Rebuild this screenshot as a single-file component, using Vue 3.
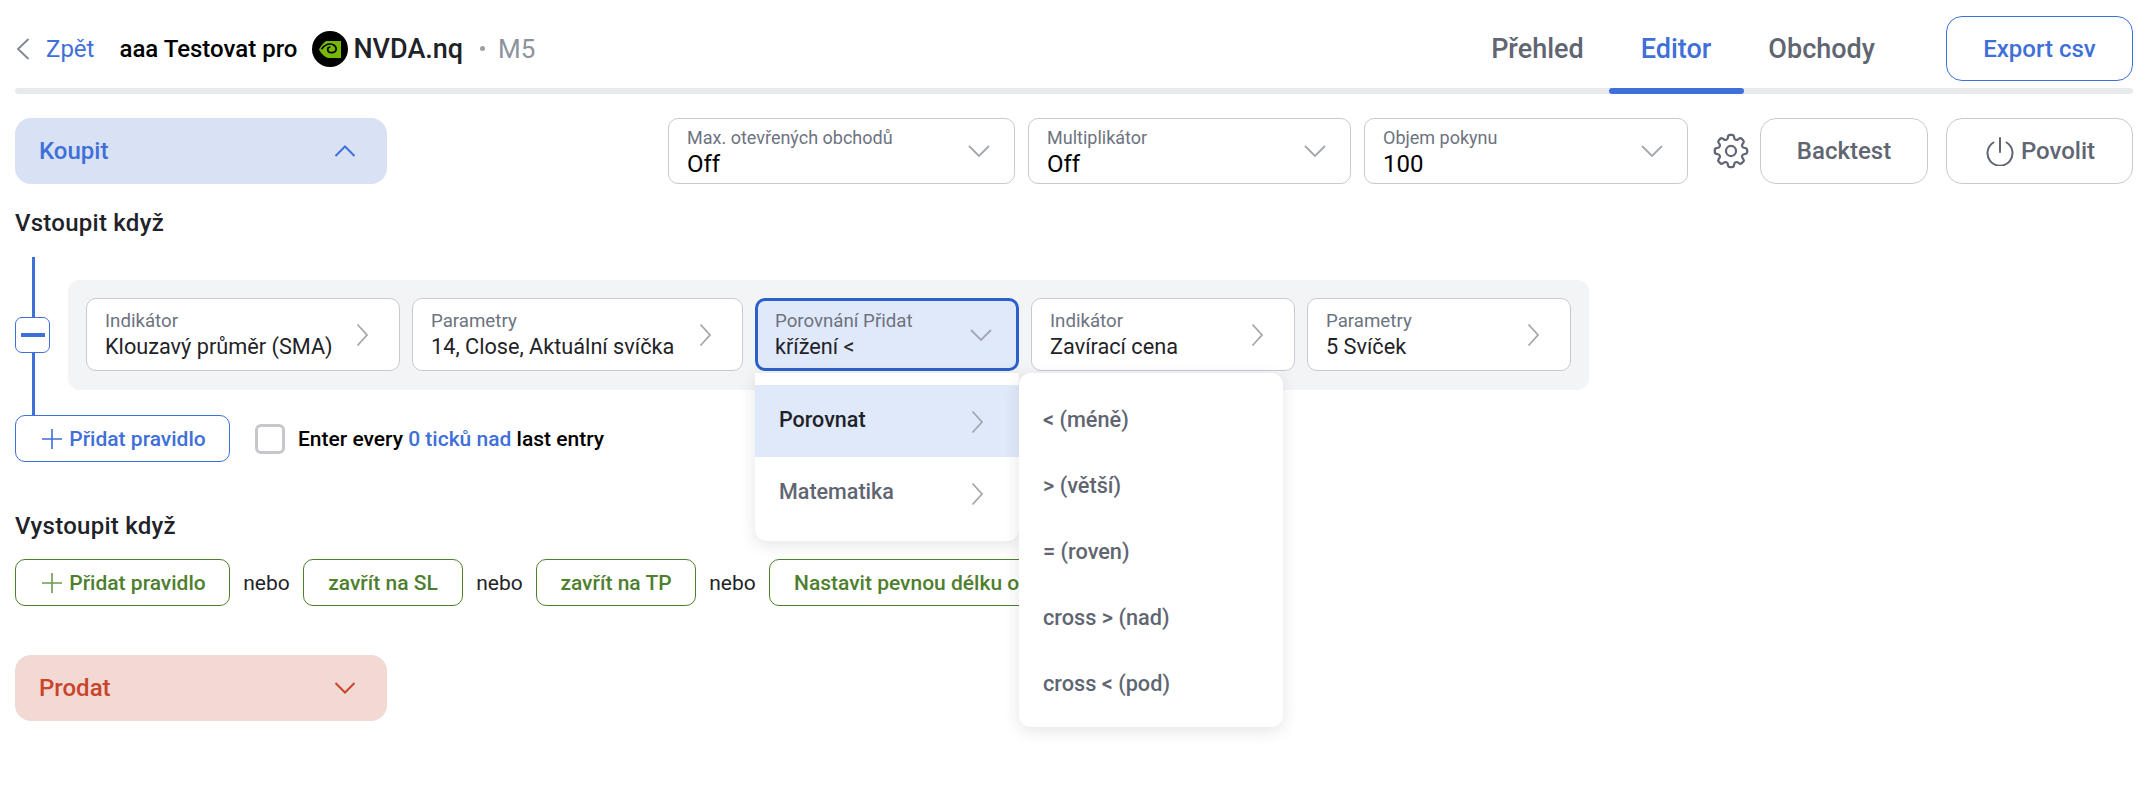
<script setup>
const selects = [
  { label: 'Max. otevřených obchodů', value: 'Off', w: 347 },
  { label: 'Multiplikátor', value: 'Off', w: 323 },
  { label: 'Objem pokynu', value: '100', w: 324 },
]
const chipsLeft = [
  { label: 'Indikátor', value: 'Klouzavý průměr (SMA)', w: 314 },
  { label: 'Parametry', value: '14, Close, Aktuální svíčka', w: 331 },
]
const chipsRight = [
  { label: 'Indikátor', value: 'Zavírací cena', w: 264 },
  { label: 'Parametry', value: '5 Svíček', w: 264 },
]
const options = ['< (méně)', '> (větší)', '= (roven)', 'cross > (nad)', 'cross < (pod)']
</script>

<template>
  <div class="page">
    <header class="head">
      <div class="crumbs">
        <svg class="back" width="14" height="24" viewBox="0 0 14 24"><path d="M12.5 2 2 12l10.500 10" /></svg>
        <span class="zpet">Zpět</span>
        <span class="name">aaa Testovat pro</span>
        <svg class="logo" width="36" height="36" viewBox="0 0 36 36">
          <circle cx="18" cy="18" r="18" fill="#000" />
          <path d="M14 10h15v17H16c-3-.8-6.500-3.500-9-8.500 1.800-3.300 4-6.600 7-8.500Z" fill="#76b900" />
          <path d="M9.500 18.200c2.500-3.500 5.500-5.200 8.500-5.200 3.600 0 6.200 2.300 6.200 5 0 2.300-2.200 3.900-4.700 3.700-2.200-.2-3.800-1.700-3.800-3.300 0-1.400 1.200-2.400 2.700-2.400" fill="none" stroke="#000" stroke-width="1.700" />
        </svg>
        <span class="sym">NVDA.nq</span>
        <span class="dot"></span>
        <span class="tf">M5</span>
      </div>
      <nav class="tabs">
        <span class="tab t1">Přehled</span>
        <span class="tab active t2">Editor</span>
        <span class="tab t3">Obchody</span>
      </nav>
      <button class="btn export">Export csv</button>
    </header>
    <div class="rule-bar"><span class="rule-active"></span></div>

    <div class="toolbar">
      <div class="panel buy">
        <span>Koupit</span>
        <svg width="22" height="12" viewBox="0 0 22 12"><path d="M1.500 11 11 1.500 20.500 11" /></svg>
      </div>
      <div class="tools">
        <div v-for="s in selects" :key="s.label" class="field top-field" :style="{ width: s.w + 'px' }">
          <div class="field-text">
            <span class="flabel">{{ s.label }}</span>
            <span class="fvalue">{{ s.value }}</span>
          </div>
          <svg class="caret" width="22" height="12" viewBox="0 0 22 12"><path d="M1 1l10 10L21 1" /></svg>
        </div>
        <svg class="gear" width="36" height="36" viewBox="2 2 20 20" fill="none">
          <path d="M10.340 3.940c.09-.542.56-.94 1.110-.94h1.093c.550 0 1.020.398 1.110.940l.149.894c.070.424.384.764.780.930.398.164.855.142 1.205-.108l.737-.527a1.125 1.125 0 0 1 1.450.120l.773.774c.39.389.44 1.002.12 1.450l-.527.737c-.250.350-.272.806-.107 1.204.165.397.505.710.930.780l.893.150c.543.090.940.560.940 1.109v1.094c0 .550-.397 1.020-.940 1.110l-.893.149c-.425.070-.765.383-.930.780-.165.398-.143.854.107 1.204l.527.738c.320.447.269 1.060-.120 1.450l-.774.773a1.125 1.125 0 0 1-1.449.120l-.738-.527c-.350-.250-.806-.272-1.203-.107-.397.165-.710.505-.781.929l-.149.894c-.090.542-.560.940-1.110.940h-1.094c-.550 0-1.019-.398-1.110-.940l-.148-.894c-.071-.424-.384-.764-.781-.930-.398-.164-.854-.142-1.204.108l-.738.527c-.447.320-1.060.269-1.450-.120l-.773-.774a1.125 1.125 0 0 1-.120-1.450l.527-.737c.250-.350.273-.806.108-1.204-.165-.397-.505-.710-.930-.780l-.894-.150c-.542-.090-.940-.560-.940-1.109v-1.094c0-.550.398-1.020.940-1.110l.894-.149c.424-.070.765-.383.930-.780.165-.398.143-.854-.108-1.204l-.526-.738a1.125 1.125 0 0 1 .120-1.450l.773-.773a1.125 1.125 0 0 1 1.450-.120l.737.527c.350.250.807.272 1.204.107.397-.165.710-.505.780-.929l.150-.894Z" stroke="#5f6672" stroke-width="1.250" />
          <circle cx="12" cy="12" r="2.800" stroke="#5f6672" stroke-width="1.250" />
        </svg>
        <button class="btn grey backtest">Backtest</button>
        <button class="btn grey povolit">
          <svg width="28" height="30" viewBox="0 0 28 30" fill="none"><path d="M14 2v14M7.500 6.500a12.500 12.500 0 1 0 13 0" stroke="#5f6672" stroke-width="2" stroke-linecap="round" /></svg>
          Povolit
        </button>
      </div>
    </div>

    <h3 class="title enter">Vstoupit když</h3>

    <div class="entry">
      <div class="tree">
        <span class="line l1"></span>
        <span class="minus"><i></i></span>
        <span class="line l2"></span>
      </div>
      <div class="rules">
        <div v-for="c in chipsLeft" :key="c.label" class="field chip" :style="{ width: c.w + 'px' }">
          <div class="field-text">
            <span class="flabel">{{ c.label }}</span>
            <span class="fvalue">{{ c.value }}</span>
          </div>
          <svg class="caret" width="12" height="24" viewBox="0 0 12 24"><path d="M1.500 1.500 11 12 1.500 22.500" /></svg>
        </div>
        <div class="compare">
          <div class="field chip open">
            <div class="field-text">
              <span class="flabel">Porovnání Přidat</span>
              <span class="fvalue">křížení &lt;</span>
            </div>
            <svg class="caret" width="22" height="12" viewBox="0 0 22 12"><path d="M1 1l10 10L21 1" /></svg>
          </div>
          <div class="menu menu-a">
            <div class="mi current"><span>Porovnat</span><svg class="caret" width="12" height="24" viewBox="0 0 12 24"><path d="M1.500 1.500 11 12 1.500 22.500" /></svg></div>
            <div class="mi"><span>Matematika</span><svg class="caret" width="12" height="24" viewBox="0 0 12 24"><path d="M1.500 1.500 11 12 1.500 22.500" /></svg></div>
          </div>
          <div class="menu menu-b">
            <div v-for="o in options" :key="o" class="opt">{{ o }}</div>
          </div>
        </div>
        <div v-for="c in chipsRight" :key="c.value" class="field chip" :style="{ width: c.w + 'px' }">
          <div class="field-text">
            <span class="flabel">{{ c.label }}</span>
            <span class="fvalue">{{ c.value }}</span>
          </div>
          <svg class="caret" width="12" height="24" viewBox="0 0 12 24"><path d="M1.500 1.500 11 12 1.500 22.500" /></svg>
        </div>
      </div>
    </div>

    <div class="add-row">
      <button class="btn add blue">
        <svg width="22" height="22" viewBox="0 0 22 22"><path d="M11 1v20M1 11h20" /></svg>
        Přidat pravidlo
      </button>
      <span class="check"></span>
      <span class="every">Enter every <b>0 ticků nad</b> last entry</span>
    </div>

    <h3 class="title exit">Vystoupit když</h3>

    <div class="exit-row">
      <button class="btn add green">
        <svg width="22" height="22" viewBox="0 0 22 22"><path d="M11 1v20M1 11h20" /></svg>
        Přidat pravidlo
      </button>
      <span class="or">nebo</span>
      <button class="btn green g2">zavřít na SL</button>
      <span class="or">nebo</span>
      <button class="btn green g2">zavřít na TP</button>
      <span class="or">nebo</span>
      <button class="btn green g3">Nastavit pevnou délku obchodu</button>
    </div>

    <div class="panel sell">
      <span>Prodat</span>
      <svg width="22" height="12" viewBox="0 0 22 12"><path d="M1.500 1 11 10.500 20.500 1" /></svg>
    </div>
  </div>
</template>

<style scoped>
.page {
  box-sizing: border-box;
  width: 2150px;
  height: 788px;
  padding: 16px 17px 0 15px;
  font-family: Roboto, "Noto Sans", sans-serif;
  color: #1f2329;
  overflow: hidden;
  background: #fff;
}
button { font-family: inherit; }
.head { display: flex; align-items: center; height: 65px; }
.crumbs { display: flex; align-items: center; flex: 1; }
.back { fill: none; stroke: #7f8690; stroke-width: 1.800; margin-left: 1px; }
.zpet { color: #3f6fd8; font-size: 24px; margin-left: 16px; }
.name { color: #000; font-size: 24px; font-weight: 500; margin-left: 25px; }
.logo { margin-left: 15px; }
.sym { font-size: 27px; font-weight: 500; margin-left: 5px; color: #1f2329; }
.dot { width: 5px; height: 5px; border-radius: 50%; background: #9aa0aa; margin-left: 17px; }
.tf { color: #8d939d; font-size: 26px; margin-left: 13px; }
.tabs { display: flex; align-self: stretch; align-items: center; margin-right: 71px; }
.tab { font-size: 27px; font-weight: 500; color: #5f6672; }
.t2 { margin-left: 57px; }
.t3 { margin-left: 57px; }
.active { color: #3f6fd8; }
.btn {
  box-sizing: border-box;
  display: flex;
  align-items: center;
  justify-content: center;
  background: #fff;
  border: 1px solid #c8cad0;
  border-radius: 16px;
  font-size: 24px;
  font-weight: 500;
  padding: 0;
}
.export { width: 187px; height: 65px; color: #3f6fd8; border-color: #3f6fd8; }
.rule-bar { position: relative; height: 6px; margin-top: 7px; background: #e8e9eb; border-radius: 3px; }
.rule-active { position: absolute; left: 1594px; top: 0; width: 135px; height: 6px; background: #3f6fd8; border-radius: 3px; }
.toolbar { display: flex; justify-content: space-between; margin-top: 24px; height: 66px; }
.panel {
  box-sizing: border-box;
  width: 372px;
  height: 66px;
  padding: 0 31px 0 24px;
  border-radius: 16px;
  display: flex;
  align-items: center;
  justify-content: space-between;
  font-size: 24px;
  font-weight: 500;
}
.panel svg { fill: none; stroke-width: 2; }
.buy { background: #d9e2f4; color: #3f6fd8; }
.buy svg { stroke: #3f6fd8; }
.sell { background: #f2d9d4; color: #c8442a; margin-top: 49px; }
.sell svg { stroke: #c8442a; }
.tools { display: flex; align-items: center; gap: 13px; }
.field {
  box-sizing: border-box;
  height: 66px;
  background: #fff;
  border: 1px solid #c8cad0;
  border-radius: 10px;
  padding: 0 24px 0 18px;
  display: flex;
  flex: none;
  align-items: center;
  justify-content: space-between;
}
.field-text { display: flex; flex-direction: column; padding-top: 3px; }
.flabel { font-size: 18px; line-height: 22px; color: #6d7380; }
.fvalue { font-size: 24px; line-height: 28px; color: #000; margin-top: 1px; }
.caret { fill: none; stroke: #a2a7b0; stroke-width: 1.800; flex: none; }
.gear { margin-left: 12px; margin-right: -2px; }
.backtest { width: 168px; height: 66px; color: #5f6672; margin-right: 5px; }
.povolit { width: 187px; height: 66px; color: #5f6672; gap: 7px; padding-left: 2px; }
.title { margin: 0; font-size: 24px; line-height: 28px; letter-spacing: 0.25px; font-weight: 500; color: #1f2329; }
.enter { margin-top: 25px; }
.exit { margin-top: 50px; }
.entry { display: flex; margin-top: 20px; height: 158px; }
.tree { width: 53px; flex: none; display: flex; flex-direction: column; align-items: flex-start; }
.line { width: 3px; background: #3f6fd8; margin-left: 17px; }
.l1 { height: 60px; }
.l2 { flex: 1; }
.minus {
  box-sizing: border-box;
  width: 35px;
  height: 36px;
  border: 1px solid #3f6fd8;
  border-radius: 7px;
  background: #fff;
  display: flex;
  align-items: center;
  justify-content: center;
}
.minus i { width: 24px; height: 4px; background: #3f6fd8; display: block; }
.rules {
  box-sizing: border-box;
  width: 1521px;
  height: 110px;
  margin-top: 23px;
  background: #f3f4f6;
  border-radius: 12px;
  padding: 18px 18px 0 18px;
  display: flex;
  gap: 12px;
  align-items: flex-start;
}
.chip { height: 73px; padding: 0 31px 0 18px; }
.chip .field-text { padding-top: 2px; }
.chip .flabel { font-size: 18.700px; }
.chip .fvalue { font-size: 21.700px; color: #1f2329; }
.compare { position: relative; width: 264px; flex: none; }
.open {
  width: 264px;
  background: #e0e9fa;
  border: 3px solid #2c5fc9;
  border-radius: 10px;
  padding: 0 24px 0 17px;
}
.menu {
  position: absolute;
  top: 75px;
  box-sizing: border-box;
  background: #fff;
  border-radius: 0 0 12px 12px;
  box-shadow: 0 4px 16px rgba(30, 40, 60, 0.12);
  z-index: 2;
}
.menu-a { left: 0; width: 264px; height: 168px; padding-top: 12px; }
.menu-b { left: 264px; width: 264px; height: 354px; border-radius: 12px; padding-top: 13px; }
.mi {
  box-sizing: border-box;
  height: 72px;
  padding: 0 36px 4px 24px;
  display: flex;
  align-items: center;
  justify-content: space-between;
  font-size: 21.500px;
  font-weight: 500;
  color: #5f6672;
}
.current { background: #e0e9fa; color: #1f2329; }
.mi .caret { margin-top: 6px; }
.opt {
  height: 66px;
  display: flex;
  align-items: center;
  padding-left: 24px;
  font-size: 21.700px;
  font-weight: 500;
  color: #5f6672;
}
.add-row { display: flex; align-items: center; height: 47px; position: relative; }
.add {
  width: 215px;
  height: 47px;
  gap: 6px;
  padding-left: 2px;
  border-radius: 10px;
  font-size: 21px;
}
.add svg { fill: none; stroke-width: 1.600; }
.blue { color: #3f6fd8; border-color: #3f6fd8; }
.blue svg { stroke: #3f6fd8; }
.green { color: #4e7f2e; border-color: #4e7f2e; }
.green svg { stroke: #6c9a50; }
.check {
  box-sizing: border-box;
  width: 30px;
  height: 30px;
  margin-left: 25px;
  border: 3px solid #c6c7ca;
  border-radius: 6px;
}
.every { margin-left: 13px; font-size: 21px; font-weight: 500; color: #000; }
.every b { font-weight: 500; color: #3f6fd8; }
.exit-row { display: flex; align-items: center; margin-top: 19px; height: 47px; }
.g2 { width: 160px; height: 47px; border-radius: 10px; font-size: 21px; }
.g3 { width: 360px; height: 47px; border-radius: 10px; font-size: 21px; justify-content: flex-start; padding-left: 24px; }
.or { font-size: 21px; color: #1f2329; margin: 0 13px; width: 47px; text-align: center; }
</style>
